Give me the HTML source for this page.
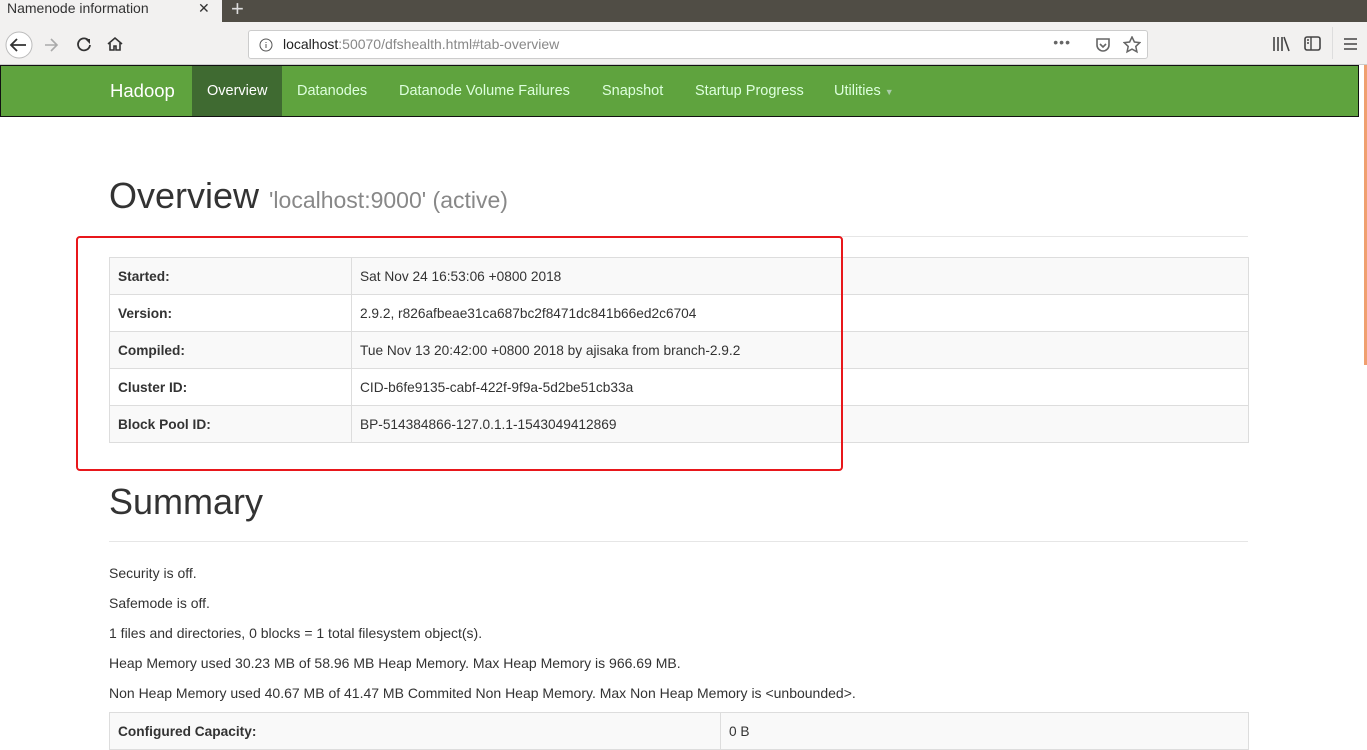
<!DOCTYPE html>
<html><head><meta charset="utf-8"><style>
*{box-sizing:border-box;margin:0;padding:0}
body{width:1367px;height:737px;overflow:hidden;background:#fff;font-family:"Liberation Sans",sans-serif;color:#333;position:relative}
.tabs{position:absolute;left:0;top:0;width:1367px;height:22px;background:#504d45}
.tab{position:absolute;left:0;top:0;width:222px;height:22px;background:#f2f1f0;font-size:14px;color:#333;padding:0 0 0 7px;line-height:17px}
.tab .x{position:absolute;left:198px;top:0;color:#333}
.plus{position:absolute;left:231px;top:-4px;color:#ddd;font-size:22px}
.tb{position:absolute;left:0;top:22px;width:1367px;height:43px;background:#f2f1f0;border-bottom:1px solid #ccc}
.url{position:absolute;left:248px;top:8px;width:900px;height:29px;background:#fff;border:1px solid #ccc;border-radius:3px;font-size:14px;line-height:27px;padding-left:34px;color:#888}
.url b{font-weight:normal;color:#222}
.nav{position:absolute;left:0;top:65px;width:1359px;height:52px;background:#5fa33e;border:1px solid #111}
.nav a{position:absolute;top:0;height:50px;line-height:50px;color:#dfd;font-size:14.5px;text-decoration:none}
.nav .act{background:#3f6a31;color:#fff;padding:0 15px}
.sb{position:absolute;left:1364px;top:65px;width:3px;height:300px;background:#f0a070}
h1{position:absolute;left:109px;font-weight:normal;font-size:36px;color:#333}
h1 small{font-size:23px;color:#888}
hr{position:absolute;left:109px;width:1139px;border:0;border-top:1px solid #e6e6e6}
table{position:absolute;left:109px;width:1140px;border-collapse:collapse;font-size:13.7px}
td{border:1px solid #ddd;height:37px;padding:0 8px;color:#333}
tr:nth-child(odd) td{background:#f9f9f9}
td.k{font-weight:bold;width:242px}
.red{position:absolute;left:76px;top:236px;width:767px;height:235px;border:2px solid #e8171b;border-radius:4px}
p{position:absolute;left:109px;font-size:14px;color:#333}
</style></head><body>
<div class="tabs"><div class="tab">Namenode information<span class="x">✕</span></div><span class="plus">+</span></div>
<div class="tb">
<svg style="position:absolute;left:3px;top:9px" width="32" height="28"><circle cx="16" cy="14" r="13" fill="#fff" stroke="#bbb"/><path d="M23 14H9M14 8l-6 6 6 6" stroke="#333" stroke-width="1.8" fill="none"/></svg>
<svg style="position:absolute;left:42px;top:14px" width="18" height="18"><path d="M15 9H3M9 3l6 6-6 6" stroke="#aaa" stroke-width="1.6" fill="none"/></svg>
<svg style="position:absolute;left:75px;top:13px" width="18" height="18"><path d="M14 6A6 6 0 1 0 15 10" stroke="#333" stroke-width="1.8" fill="none"/><path d="M10 4h5v5z" fill="#333"/></svg>
<svg style="position:absolute;left:106px;top:13px" width="18" height="18"><path d="M2 9L9 3l7 6M4 8v7h4v-4h2v4h4V8" stroke="#333" stroke-width="1.6" fill="none"/></svg>
<div class="url"><svg style="position:absolute;left:10px;top:7px" width="14" height="14"><circle cx="7" cy="7" r="6" stroke="#555" fill="none"/><path d="M7 6v4M7 4v1" stroke="#555"/></svg><b>localhost</b>:50070/dfshealth.html#tab-overview
<span style="position:absolute;right:76px;top:-2px;color:#666;letter-spacing:1px">•••</span>
<svg style="position:absolute;right:36px;top:6px" width="16" height="16"><path d="M2 2h12v6a6 6 0 0 1-12 0z" stroke="#666" stroke-width="1.6" fill="none"/><path d="M5 7l3 3 3-3" stroke="#666" stroke-width="1.6" fill="none"/></svg>
<svg style="position:absolute;right:6px;top:5px" width="18" height="18"><path d="M9 1l2.4 5 5.4.6-4 3.8 1.1 5.4L9 13.1 4.1 15.8l1.1-5.4-4-3.8 5.4-.6z" stroke="#666" stroke-width="1.5" fill="none"/></svg></div>
<svg style="position:absolute;left:1272px;top:14px" width="18" height="16"><path d="M2 1v14M6 1v14M10 1v14M12 1l5 14" stroke="#444" stroke-width="1.6"/></svg>
<svg style="position:absolute;left:1304px;top:14px" width="18" height="16"><rect x="1" y="1" width="15" height="13" rx="2" stroke="#444" stroke-width="1.6" fill="none"/><path d="M7 1v13M3 4h2M3 7h2" stroke="#444" stroke-width="1.4"/></svg>
<div style="position:absolute;left:1332px;top:5px;width:1px;height:32px;background:#ddd"></div>
<svg style="position:absolute;left:1344px;top:15px" width="14" height="14"><path d="M0 2h13M0 7h13M0 12h13" stroke="#444" stroke-width="1.6"/></svg>
</div>
<div class="nav">
<a style="left:109px;color:#fff;font-size:18.5px">Hadoop</a>
<a class="act" style="left:191px">Overview</a>
<a style="left:296px">Datanodes</a>
<a style="left:398px">Datanode Volume Failures</a>
<a style="left:601px">Snapshot</a>
<a style="left:694px">Startup Progress</a>
<a style="left:833px">Utilities <span style="font-size:9px;color:#aca">▼</span></a>
</div>
<div class="sb"></div>
<h1 style="top:175px">Overview <small>'localhost:9000' (active)</small></h1>
<hr style="top:236px">
<table style="top:257px">
<tr><td class="k">Started:</td><td>Sat Nov 24 16:53:06 +0800 2018</td></tr>
<tr><td class="k">Version:</td><td>2.9.2, r826afbeae31ca687bc2f8471dc841b66ed2c6704</td></tr>
<tr><td class="k">Compiled:</td><td>Tue Nov 13 20:42:00 +0800 2018 by ajisaka from branch-2.9.2</td></tr>
<tr><td class="k">Cluster ID:</td><td>CID-b6fe9135-cabf-422f-9f9a-5d2be51cb33a</td></tr>
<tr><td class="k">Block Pool ID:</td><td>BP-514384866-127.0.1.1-1543049412869</td></tr>
</table>
<div class="red"></div>
<h1 style="top:481px">Summary</h1>
<hr style="top:541px">
<p style="top:565px">Security is off.</p>
<p style="top:595px">Safemode is off.</p>
<p style="top:625px">1 files and directories, 0 blocks = 1 total filesystem object(s).</p>
<p style="top:655px">Heap Memory used 30.23 MB of 58.96 MB Heap Memory. Max Heap Memory is 966.69 MB.</p>
<p style="top:685px">Non Heap Memory used 40.67 MB of 41.47 MB Commited Non Heap Memory. Max Non Heap Memory is &lt;unbounded&gt;.</p>
<table style="top:712px"><tr><td class="k" style="width:611px">Configured Capacity:</td><td>0 B</td></tr></table>
</body></html>
